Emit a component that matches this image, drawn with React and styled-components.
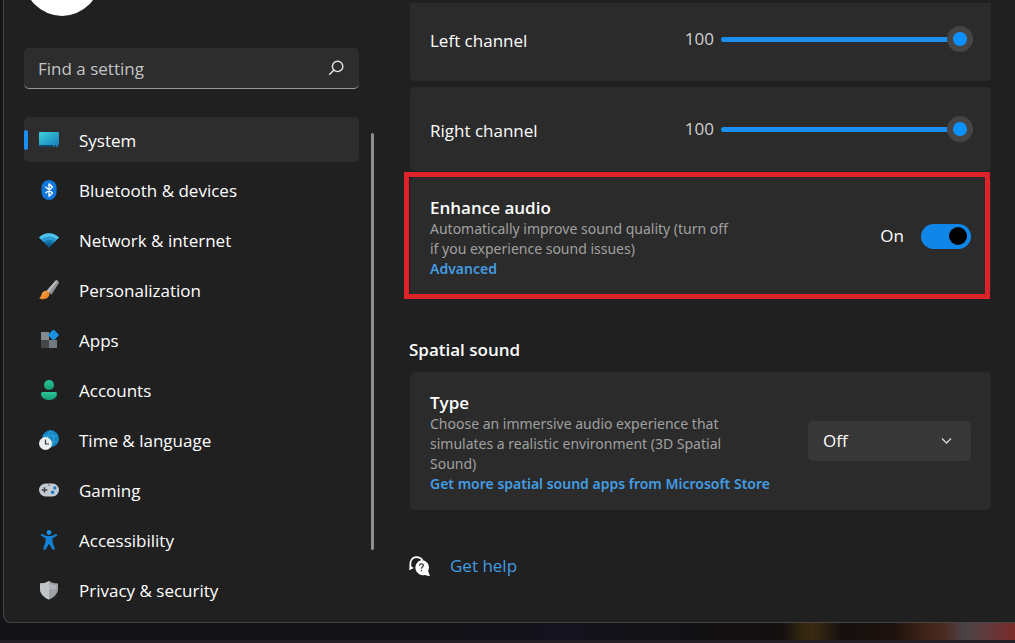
import React, { useState } from "react";
import styled, { createGlobalStyle } from "styled-components";

const GlobalStyle = createGlobalStyle`
  * {
    box-sizing: border-box;
  }
  body {
    margin: 0;
    background: #141318;
    color: #fff;
    font-family: "Open Sans", "Noto Sans", sans-serif;
    font-size: 17px;
    line-height: 24px;
  }
  input,
  select,
  button {
    font: inherit;
    color: inherit;
  }
`;

const Desktop = styled.div`
  display: flex;
  flex-direction: column;
  min-height: 100vh;
  overflow: hidden;
`;

const Window = styled.div`
  flex: 1;
  display: flex;
  margin-left: 3px;
  overflow: hidden;
  background: #202020;
  border: solid #444;
  border-width: 0 0 1px 1px;
  border-bottom-left-radius: 8px;
`;

const Wallpaper = styled.div`
  height: 17px;
  background: linear-gradient(
    90deg,
    #141318 0%,
    #131218 46%,
    #14131f 56%,
    #131215 64%,
    #120f0f 77%,
    #33250f 79%,
    #3a2a12 80%,
    #16100e 83%,
    #1d120e 88%,
    #3d2417 91%,
    #4c2a20 93%,
    #4a4346 95%,
    #5e3c3e 97%,
    #7c2a29 100%
  );
`;

const Taskbar = styled.div`
  height: 3px;
  background: #242226;
`;

const Sidebar = styled.aside`
  flex: none;
  width: 355px;
  padding-left: 20px;
`;

const Avatar = styled.div`
  width: 76px;
  height: 76px;
  margin-top: -60px;
  border-radius: 50%;
  background: #fff;
`;

const Search = styled.label`
  display: flex;
  align-items: center;
  height: 41px;
  margin: 32px 0 28px;
  padding: 0 15px 0 14px;
  border-radius: 5px;
  border-bottom: 1px solid #9a9a9a;
  background: #2d2d2d;
`;

const SearchInput = styled.input`
  flex: 1;
  min-width: 0;
  padding: 2px 0 0;
  border: 0;
  outline: 0;
  background: none;
  &::placeholder {
    color: #c4c4c4;
    opacity: 1;
  }
`;

const Nav = styled.nav`
  display: flex;
  flex-direction: column;
  gap: 5px;
  padding-bottom: 9px;
`;

const NavLink = styled.a`
  display: flex;
  align-items: center;
  gap: 20px;
  height: 45px;
  border-radius: 5px;
  color: #fff;
  text-decoration: none;
  background: ${(props) => (props.$active ? "#2d2d2d" : "transparent")};
  &::before {
    content: "";
    width: 4px;
    height: 20px;
    margin-right: -9px;
    border-radius: 2px;
    background: ${(props) => (props.$active ? "#1a8ff0" : "transparent")};
  }
`;

const NavLabel = styled.span`
  padding-top: 2px;
`;

const ScrollThumb = styled.div`
  flex: none;
  width: 3px;
  height: 417px;
  margin: 133px 0 0 12px;
  border-radius: 2px;
  background: #8f8f8f;
`;

const Content = styled.main`
  flex: 1;
  min-width: 0;
  margin-top: 3px;
  padding: 0 24px 0 36px;
  overflow: hidden;
`;

const CardList = styled.div`
  display: flex;
  flex-direction: column;
  gap: 6px;
  margin-top: -6px;
`;

const Card = styled.section`
  position: relative;
  display: flex;
  align-items: center;
  justify-content: space-between;
  min-height: 84px;
  padding: 16px 20px;
  border-radius: 5px;
  background: #2b2b2b;
`;

const CardText = styled.div`
  padding-top: 4px;
`;

const CardTitle = styled.h3`
  display: block;
  margin: 0;
  font-size: 17px;
  font-weight: 600;
  line-height: 22px;
`;

const Description = styled.p`
  max-width: 304px;
  margin: 0;
  color: #a0a0a0;
  font-family: "Noto Sans", sans-serif;
  font-size: 14px;
  line-height: 20px;
`;

const CardLink = styled.a`
  display: block;
  color: #439ce2;
  font-family: "Noto Sans", sans-serif;
  font-size: 14px;
  font-weight: 600;
  line-height: 20px;
  text-decoration: none;
  white-space: nowrap;
`;

const ChannelLabel = styled.label`
  padding-top: 4px;
`;

const SliderGroup = styled.div`
  display: flex;
  align-items: center;
  gap: 7px;
  margin-right: -2px;
`;

const SliderValue = styled.output`
  color: #cfcfcf;
`;

const Slider = styled.input`
  appearance: none;
  width: 252px;
  height: 26px;
  margin: 0;
  background: none;
  &::-webkit-slider-runnable-track {
    height: 5px;
    border-radius: 3px;
    background: linear-gradient(
      90deg,
      #1a8ff0 ${(props) => props.value}%,
      #9a9a9a ${(props) => props.value}%
    );
  }
  &::-webkit-slider-thumb {
    appearance: none;
    width: 26px;
    height: 26px;
    margin-top: -11px;
    border: 6px solid #454545;
    border-radius: 50%;
    background: #0c92ff;
  }
`;

const Highlight = styled.div`
  position: absolute;
  inset: -5px 1px -4px -6px;
  border: 5px solid #dd2229;
  pointer-events: none;
`;

const SwitchGroup = styled.label`
  display: flex;
  align-items: center;
  gap: 17px;
`;

const Switch = styled.input`
  appearance: none;
  display: flex;
  align-items: center;
  justify-content: ${(props) => (props.checked ? "flex-end" : "flex-start")};
  width: 50px;
  height: 25px;
  margin: 0;
  padding: 0 4px;
  border-radius: 13px;
  background: ${(props) => (props.checked ? "#0f86e8" : "#5a5a5a")};
  &::before {
    content: "";
    width: 18px;
    height: 18px;
    border-radius: 50%;
    background: #000;
  }
`;

const SectionTitle = styled.h2`
  margin: 43px 0 10px -1px;
  font-size: 17px;
  font-weight: 600;
  line-height: 24px;
`;

const SelectBox = styled.div`
  position: relative;
  width: 163px;
  svg {
    position: absolute;
    top: 15px;
    right: 18px;
    pointer-events: none;
  }
`;

const Select = styled.select`
  appearance: none;
  display: block;
  width: 100%;
  height: 40px;
  padding: 0 15px;
  border: 0;
  border-radius: 5px;
  background: #373737;
`;

const HelpRow = styled.div`
  display: flex;
  align-items: center;
  gap: 20px;
  margin: 44px 0 0 -1px;
`;

const HelpLink = styled.a`
  color: #439ce2;
  text-decoration: none;
`;

const Icon = ({ children, size = 20 }) => (
  <svg width={size} height={size} viewBox="0 0 20 20" fill="none" aria-hidden="true">
    {children}
  </svg>
);

const SystemIcon = () => (
  <Icon>
    <defs>
      <linearGradient id="screen" x1="0" y1="0" x2="1" y2="1">
        <stop offset="0" stopColor="#3fd3de" />
        <stop offset="1" stopColor="#1377b8" />
      </linearGradient>
    </defs>
    <rect y="2" width="20" height="15" rx="1" fill="url(#screen)" />
    <path d="M0 15h20v1a1 1 0 0 1-1 1H1a1 1 0 0 1-1-1z" fill="#12496b" />
    <path d="M14.500 16h1M17 16h1" stroke="#4fc3ea" />
  </Icon>
);

const BluetoothIcon = () => (
  <Icon>
    <rect x="2.500" width="15" height="20" rx="7.500" fill="#0f78dc" />
    <path
      d="M6.500 6.800l7 6.200-3.500 3.200V3.800l3.500 3.200-7 6.200"
      stroke="#fff"
      strokeWidth="1.300"
      strokeLinejoin="round"
    />
  </Icon>
);

const NetworkIcon = () => (
  <Icon>
    <path d="M0 7.500C5.500 1.800 14.500 1.800 20 7.500L10 17.500z" fill="#1476ae" />
    <path d="M0 7.500C5.500 1.800 14.500 1.800 20 7.500L17.700 9.800C13.500 5.600 6.500 5.600 2.300 9.800z" fill="#4fc1ea" />
    <path d="M2.300 9.800C6.500 5.600 13.500 5.600 17.700 9.800L15.300 12.200C12.400 9.400 7.600 9.400 4.700 12.200z" fill="#2b9bd2" />
    <path d="M7 14.500a4.300 4.300 0 0 1 6 0l-3 3z" fill="#0f5c92" />
  </Icon>
);

const BrushIcon = () => (
  <Icon>
    <defs>
      <linearGradient id="bristle" x1="0" y1="0" x2="1" y2="1">
        <stop offset="0" stopColor="#ffb05a" />
        <stop offset="1" stopColor="#e0700f" />
      </linearGradient>
    </defs>
    <path d="M16.500 .8c1.800-1.200 4.200 1 3 3L12.500 14.500 7.500 11z" fill="#8d9194" />
    <path d="M16.500 .8c.8-.6 1.800-.5 2.400 0L9.800 12.600 7.500 11z" fill="#b9bcbe" />
    <path
      d="M4.500 11.500c2.200-1.500 4.200-.8 5.500.8 1.200 1.800.4 4-1.500 5.500-2.500 2-6.300 1.800-8.500.2 2.500-.5 2-4.500 4.500-6.500z"
      fill="url(#bristle)"
    />
  </Icon>
);

const AppsIcon = () => (
  <Icon>
    <path d="M2 2h8v8H2z" fill="#84898d" />
    <path d="M2 10h8v8H2z" fill="#45484b" />
    <path d="M10 10h8v8h-8z" fill="#74797d" />
    <rect x="10.500" y="1" width="8" height="8" rx="1" transform="rotate(45 14.500 5)" fill="#1a8fe0" />
  </Icon>
);

const AccountsIcon = () => (
  <Icon>
    <defs>
      <linearGradient id="person" x1="0" y1="0" x2="0" y2="1">
        <stop offset="0" stopColor="#2cc59a" />
        <stop offset="1" stopColor="#159a73" />
      </linearGradient>
    </defs>
    <circle cx="10" cy="5" r="5" fill="url(#person)" />
    <path d="M3.500 12h13A1.500 1.500 0 0 1 18 13.500C18 17.500 14.500 20 10 20s-8-2.500-8-6.500A1.500 1.500 0 0 1 3.500 12z" fill="url(#person)" />
  </Icon>
);

const TimeIcon = () => (
  <Icon>
    <circle cx="11.500" cy="8.800" r="8.500" fill="#1583c4" />
    <path d="M4 6h15M4 12h15M11.500 .5c-4 4.500-4 12.500 0 17M11.500 .5c4 4.500 4 12.500 0 17" stroke="#3aaede" strokeWidth=".8" />
    <circle cx="6.500" cy="13.500" r="6.500" fill="#eceff1" />
    <path d="M6.500 9.500V14H10" stroke="#33383c" strokeWidth="1.200" />
  </Icon>
);

const GamingIcon = () => (
  <Icon>
    <rect y="3.500" width="20" height="13" rx="6.500" fill="#c4cad0" />
    <path d="M5.500 7.200v5.600M2.700 10h5.600" stroke="#3d4246" strokeWidth="1.400" />
    <path d="M9 5.200h2" stroke="#6d7378" />
    <circle cx="15.800" cy="7.900" r="1.700" fill="#1a77c9" />
    <circle cx="13.600" cy="12.200" r="1.700" fill="#1a77c9" />
  </Icon>
);

const AccessibilityIcon = () => (
  <Icon>
    <circle cx="10" cy="2.500" r="2.400" fill="#1590e4" />
    <path
      d="M3.200 4l4.300 2h5l4.300-2c1.200-.4 2 1.200.9 1.800L13.500 8.300V12l2.200 6.300c.4 1.400-1.700 2.200-2.400.9L10 13.800l-3.300 5.400c-.7 1.300-2.800.5-2.400-.9L6.500 12V8.300L2.300 5.800C1.200 5.200 2 3.600 3.200 4z"
      fill="#1181d6"
    />
  </Icon>
);

const PrivacyIcon = () => (
  <Icon>
    <path d="M10 1c2.600 1.700 5.500 2.500 9 2.500V9c0 4.500-4 8.500-9 10.500C5 17.500 1 13.500 1 9V3.500C4.500 3.500 7.400 2.700 10 1z" fill="#9ca1a6" />
    <path d="M10 1v18.500C5 17.500 1 13.500 1 9V3.500C4.500 3.500 7.400 2.700 10 1z" fill="#c0c4c8" />
    <path d="M10 3.300c2.200 1.300 4.400 1.800 7 2V9.500H10z" fill="#b0b5ba" />
  </Icon>
);

const SearchIcon = () => (
  <Icon size={16}>
    <circle cx="12" cy="8" r="6.500" stroke="#e4e4e4" strokeWidth="1.800" />
    <path d="M7.500 12.500L1.500 18.500" stroke="#e4e4e4" strokeWidth="1.800" />
  </Icon>
);

const ChevronIcon = () => (
  <svg width="13" height="10" viewBox="0 0 13 10" fill="none" aria-hidden="true">
    <path d="M2 2.500L6.500 7 11 2.500" stroke="#d6d6d6" strokeWidth="1.300" />
  </svg>
);

const HelpIcon = () => (
  <Icon size={21}>
    <path d="M1.500 10.500C.5 4.500 3.200 1 7 1c2.800 0 4.700 1 5.800 3" stroke="#fff" strokeWidth="1.600" />
    <path d="M0 13.500l.8-4.800 3.800 2.800z" fill="#fff" />
    <path d="M11.800 3.800a7.200 7.200 0 0 1 6.400 10.500l1.800 5-5-1.200A7.200 7.200 0 1 1 11.800 3.800z" fill="#fff" />
    <path d="M10 9.200c0-2.400 3.700-2.400 3.700-.1 0 1.400-1.900 1.500-1.900 3M11.800 13.300v1.300" stroke="#3a3a3a" strokeWidth="1.200" />
  </Icon>
);

const navItems = [
  { label: "System", icon: SystemIcon },
  { label: "Bluetooth & devices", icon: BluetoothIcon },
  { label: "Network & internet", icon: NetworkIcon },
  { label: "Personalization", icon: BrushIcon },
  { label: "Apps", icon: AppsIcon },
  { label: "Accounts", icon: AccountsIcon },
  { label: "Time & language", icon: TimeIcon },
  { label: "Gaming", icon: GamingIcon },
  { label: "Accessibility", icon: AccessibilityIcon },
  { label: "Privacy & security", icon: PrivacyIcon },
];

const Channel = ({ id, label }) => {
  const [volume, setVolume] = useState(100);

  return (
    <Card>
      <ChannelLabel htmlFor={id}>{label}</ChannelLabel>
      <SliderGroup>
        <SliderValue htmlFor={id}>{volume}</SliderValue>
        <Slider
          id={id}
          type="range"
          min="0"
          max="100"
          value={volume}
          onChange={(e) => setVolume(e.target.value)}
        />
      </SliderGroup>
    </Card>
  );
};

const App = () => {
  const [active, setActive] = useState("System");
  const [enhance, setEnhance] = useState(true);

  return (
    <Desktop>
      <GlobalStyle />
      <Window>
        <Sidebar>
          <Avatar />
          <Search>
            <SearchInput type="text" placeholder="Find a setting" aria-label="Find a setting" />
            <SearchIcon />
          </Search>
          <Nav>
            {navItems.map(({ label, icon: ItemIcon }) => (
              <NavLink
                key={label}
                href="#"
                $active={label === active}
                onClick={() => setActive(label)}
              >
                <ItemIcon />
                <NavLabel>{label}</NavLabel>
              </NavLink>
            ))}
          </Nav>
        </Sidebar>
        <ScrollThumb />
        <Content>
          <CardList>
            <Channel id="left" label="Left channel" />
            <Channel id="right" label="Right channel" />
            <Card>
              <CardText>
                <CardTitle>Enhance audio</CardTitle>
                <Description>
                  Automatically improve sound quality (turn off if you experience sound issues)
                </Description>
                <CardLink href="#">Advanced</CardLink>
              </CardText>
              <SwitchGroup>
                {enhance ? "On" : "Off"}
                <Switch
                  type="checkbox"
                  role="switch"
                  aria-label="Enhance audio"
                  checked={enhance}
                  onChange={() => setEnhance(!enhance)}
                />
              </SwitchGroup>
              <Highlight />
            </Card>
          </CardList>
          <SectionTitle>Spatial sound</SectionTitle>
          <Card>
            <CardText>
              <CardTitle as="label" htmlFor="spatial">
                Type
              </CardTitle>
              <Description>
                Choose an immersive audio experience that simulates a realistic environment (3D
                Spatial Sound)
              </Description>
              <CardLink href="#">Get more spatial sound apps from Microsoft Store</CardLink>
            </CardText>
            <SelectBox>
              <Select id="spatial" defaultValue="Off">
                <option>Off</option>
                <option>Windows Sonic for Headphones</option>
              </Select>
              <ChevronIcon />
            </SelectBox>
          </Card>
          <HelpRow>
            <HelpIcon />
            <HelpLink href="#">Get help</HelpLink>
          </HelpRow>
        </Content>
      </Window>
      <Wallpaper />
      <Taskbar />
    </Desktop>
  );
};

export default App;
